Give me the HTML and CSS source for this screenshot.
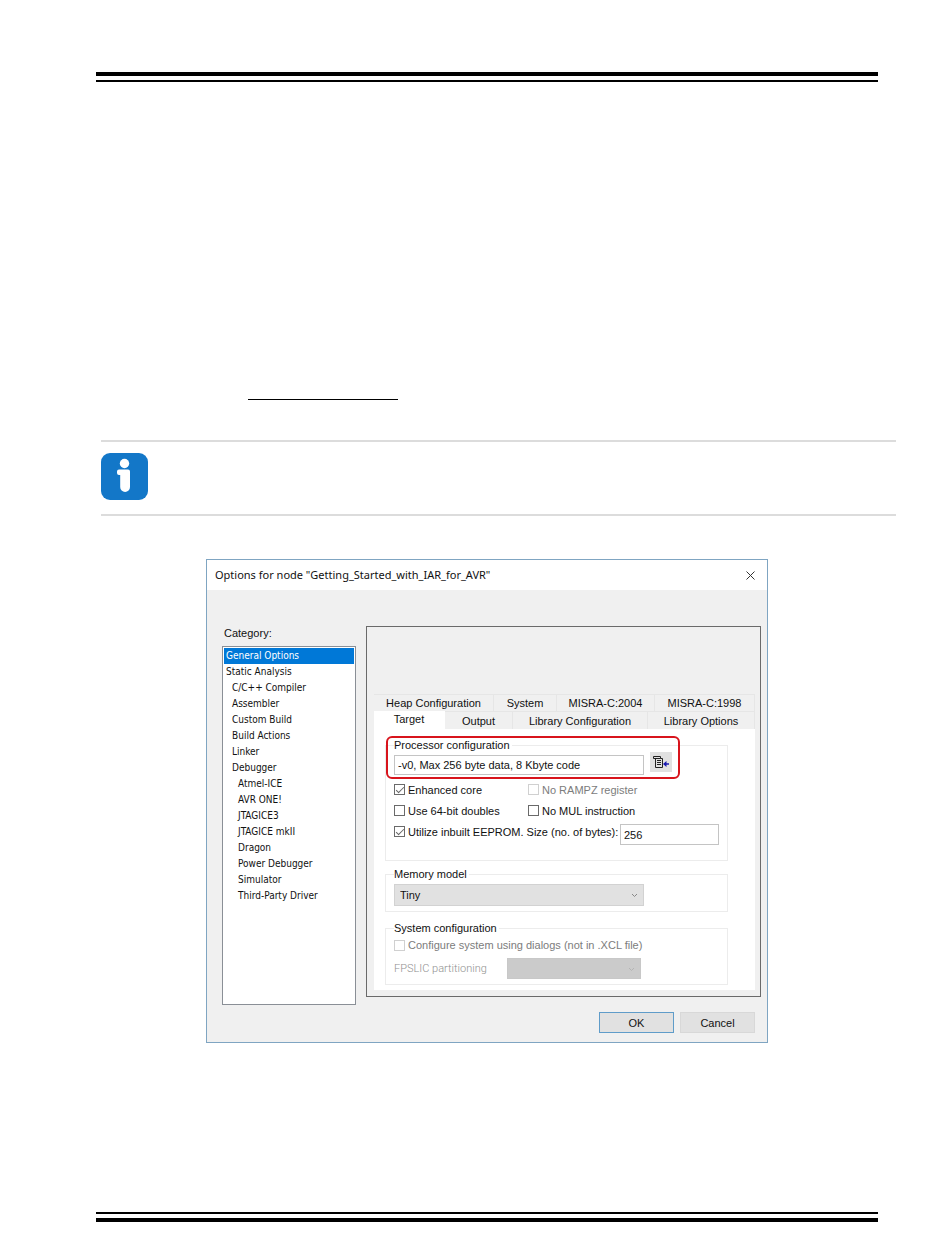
FILE: index.html
```html
<!DOCTYPE html>
<html lang="en">
<head>
    <meta charset="UTF-8">
    <meta name="viewport" content="width=device-width, initial-scale=1.0">
    <title>Options for node</title>
    <link rel="stylesheet" href="styles.css">
</head>
<body>
    <header class="page-header"></header>

    <main>
        <hr class="reference-line">

        <section class="notice">
            <svg class="info-icon" viewBox="0 0 47 47" role="img" aria-label="Info">
                <rect width="47" height="47" rx="9" fill="#1377c8"/>
                <circle cx="23.500" cy="10.500" r="4.700" fill="#fff"/>
                <path d="M18 16.500H27Q29 16.500 29 18.500V34A4.900 4.900 0 0 1 19.200 34V22H18Q16 22 16 20V18.500Q16 16.500 18 16.500Z" fill="#fff"/>
            </svg>
        </section>

        <section class="dialog">
            <div class="title-bar">
                <h1>Options for node "Getting_Started_with_IAR_for_AVR"</h1>
                <button class="close" type="button" aria-label="Close">
                    <svg viewBox="0 0 9 9"><path d="M.5 .5L8.500 8.500M8.500 .5L.5 8.500" stroke="#333" fill="none"/></svg>
                </button>
            </div>

            <div class="dialog-body">
                <nav class="category">
                    <h2>Category:</h2>
                    <ul>
                        <li><a class="selected" href="#">General Options</a></li>
                        <li><a href="#">Static Analysis</a></li>
                        <li><a class="level-1" href="#">C/C++ Compiler</a></li>
                        <li><a class="level-1" href="#">Assembler</a></li>
                        <li><a class="level-1" href="#">Custom Build</a></li>
                        <li><a class="level-1" href="#">Build Actions</a></li>
                        <li><a class="level-1" href="#">Linker</a></li>
                        <li><a class="level-1" href="#">Debugger</a></li>
                        <li><a class="level-2" href="#">Atmel-ICE</a></li>
                        <li><a class="level-2" href="#">AVR ONE!</a></li>
                        <li><a class="level-2" href="#">JTAGICE3</a></li>
                        <li><a class="level-2" href="#">JTAGICE mkII</a></li>
                        <li><a class="level-2" href="#">Dragon</a></li>
                        <li><a class="level-2" href="#">Power Debugger</a></li>
                        <li><a class="level-2" href="#">Simulator</a></li>
                        <li><a class="level-2" href="#">Third-Party Driver</a></li>
                    </ul>
                </nav>

                <div class="panel">
                    <div class="tabs tabs-back">
                        <button type="button">Heap Configuration</button>
                        <button type="button">System</button>
                        <button type="button">MISRA-C:2004</button>
                        <button type="button">MISRA-C:1998</button>
                    </div>
                    <div class="tabs tabs-front">
                        <button class="active" type="button">Target</button>
                        <button type="button">Output</button>
                        <button type="button">Library Configuration</button>
                        <button type="button">Library Options</button>
                    </div>

                    <form class="tab-page">
                        <fieldset class="processor">
                            <legend><label for="processor">Processor configuration</label></legend>
                            <div class="processor-row">
                                <input id="processor" class="text-box" type="text" value="-v0, Max 256 byte data, 8 Kbyte code">
                                <button class="pick" type="button" aria-label="Select processor">
                                    <svg viewBox="0 0 16 14">
                                        <path d="M.5 1.500H7.500V3.500H.5ZM2.500 3.500V12.500H9.500V3.500H7.500" stroke="#222" fill="none"/>
                                        <path d="M4 5.500H8M4 7.500H8M4 9.500H8" stroke="#222"/>
                                        <path d="M11 9H16" stroke="#1818b0" stroke-width="1.500"/>
                                        <path d="M10 9L13.500 6V12Z" fill="#1818b0"/>
                                    </svg>
                                </button>
                            </div>
                            <div class="highlight"></div>
                            <div class="options">
                                <label class="check"><input type="checkbox" checked>Enhanced core</label>
                                <label class="check disabled"><input type="checkbox" disabled>No RAMPZ register</label>
                                <label class="check"><input type="checkbox">Use 64-bit doubles</label>
                                <label class="check"><input type="checkbox">No MUL instruction</label>
                            </div>
                            <div class="eeprom-row">
                                <label class="check"><input type="checkbox" checked>Utilize inbuilt EEPROM. Size (no. of bytes):</label>
                                <input class="text-box" type="text" value="256" aria-label="EEPROM size">
                            </div>
                        </fieldset>

                        <fieldset class="memory">
                            <legend><label for="memory">Memory model</label></legend>
                            <div class="drop-down">
                                <select id="memory"><option>Tiny</option></select>
                                <svg viewBox="0 0 7 5"><path d="M1 1L3.500 3.500L6 1" stroke="#888" fill="none"/></svg>
                            </div>
                        </fieldset>

                        <fieldset class="system">
                            <legend>System configuration</legend>
                            <label class="check disabled"><input type="checkbox" disabled>Configure system using dialogs (not in .XCL file)</label>
                            <div class="fpslic-row">
                                <label for="fpslic">FPSLIC partitioning</label>
                                <div class="drop-down">
                                    <select id="fpslic" disabled></select>
                                    <svg viewBox="0 0 7 5"><path d="M1 1L3.500 3.500L6 1" stroke="#b4b4b4" fill="none"/></svg>
                                </div>
                            </div>
                        </fieldset>
                    </form>
                </div>
            </div>

            <div class="actions">
                <button class="default" type="button">OK</button>
                <button type="button">Cancel</button>
            </div>
        </section>
    </main>

    <footer class="page-footer"></footer>
</body>
</html>
```

FILE: styles.css
```css
* {
    box-sizing: border-box;
}

body {
    margin: 0;
    min-height: 100vh;
    display: flex;
    flex-direction: column;
    background-color: #fff;
    color: #111;
    font-family: "Liberation Sans", Arial, sans-serif;
    font-size: 11px;
    line-height: 14px;
}

button, input, select {
    margin: 0;
    padding: 0;
    border: none;
    border-radius: 0;
    font: inherit;
    color: inherit;
}

/* Double rules at the top and bottom of the page */
.page-header, .page-footer {
    height: 10px;
    margin: 72px 72px 0 96px;
    border-top: 4px solid #000;
    border-bottom: 2px solid #000;
}

.page-footer {
    margin: auto 72px 26px 96px;
    border-top-width: 2px;
    border-bottom-width: 4px;
}

.reference-line {
    width: 150px;
    margin: 317px 0 0 248px;
    border: none;
    border-top: 1px solid #000;
}

.notice {
    margin: 40px 54px 0 101px;
    padding: 11px 0 14px;
    border-top: 2px solid #dcdcdc;
    border-bottom: 2px solid #dcdcdc;
}

.info-icon {
    display: block;
    width: 47px;
    height: 47px;
}

/* Dialog window */
.dialog {
    margin: 43px 182px 0 206px;
    border: 1px solid #7fa5c2;
    background-color: #f0f0f0;
}

.title-bar {
    display: flex;
    justify-content: space-between;
    align-items: center;
    height: 30px;
    padding: 0 12px 0 8px;
    background-color: #fff;
}

.title-bar h1 {
    margin: 0;
    font-family: "Noto Sans", "Open Sans", sans-serif;
    font-size: 11px;
    font-weight: normal;
}

.close {
    display: flex;
    background: none;
}

.close svg {
    width: 9px;
    height: 9px;
}

.dialog-body {
    display: grid;
    grid-template-columns: 134px 1fr;
    gap: 10px;
    padding: 36px 6px 0 15px;
}

.category {
    display: flex;
    flex-direction: column;
}

.category h2 {
    margin: 0 0 6px 2px;
    font-size: 11px;
    font-weight: normal;
}

.category ul {
    flex: 1;
    margin: 0;
    padding: 1px;
    border: 1px solid #8a8f96;
    background-color: #fff;
    font-family: Tahoma, "DejaVu Sans Condensed", "Noto Sans", sans-serif;
    font-size: 10px;
    list-style: none;
}

.category a {
    display: block;
    padding-left: 2px;
    color: #111;
    line-height: 16px;
    text-decoration: none;
}

.category .selected {
    background-color: #0078d7;
    color: #fff;
}

.category .level-1 {
    padding-left: 8px;
}

.category .level-2 {
    padding-left: 14px;
}

.panel {
    margin-bottom: 8px;
    padding: 67px 5px 6px 7px;
    border: 1px solid #6a6a6a;
}

/* Two rows of tabs */
.tabs {
    display: grid;
}

.tabs-back {
    grid-template-columns: 120fr 63fr 98fr 100fr;
    height: 17px;
}

.tabs-front {
    grid-template-columns: 71fr 68fr 135fr 107fr;
    height: 18px;
}

.tabs button {
    border-top: 1px solid #e6e6e6;
    border-right: 1px solid #e6e6e6;
    background-color: #f0f0f0;
    white-space: nowrap;
}

.tabs .active {
    padding-bottom: 3px;
    border-color: #fff;
    background-color: #fff;
}

.tab-page {
    padding: 9px 27px 5px 11px;
    background-color: #fff;
}

fieldset {
    position: relative;
    min-width: 0;
    margin: 0;
    padding: 0 8px;
    border: 1px solid #ececec;
}

legend {
    padding: 0 2px 0 0;
}

.processor {
    padding-bottom: 15px;
}

.processor-row {
    display: flex;
    align-items: flex-start;
    gap: 6px;
    margin-right: 47px;
}

.text-box {
    flex: 1;
    min-width: 0;
    height: 20px;
    padding: 0 3px;
    border: 1px solid #c4c4c4;
    background-color: #fff;
}

.processor-row .text-box {
    margin-top: 3px;
}

.pick {
    display: flex;
    justify-content: center;
    align-items: center;
    width: 22px;
    height: 20px;
    background-color: #e1e1e1;
}

.pick svg {
    width: 16px;
    height: 14px;
}

/* Red frame around the processor setting */
.highlight {
    position: absolute;
    top: -16px;
    left: 0;
    right: 47px;
    height: 43px;
    border: 2px solid #d8141c;
    border-radius: 6px;
    pointer-events: none;
}

.options {
    display: grid;
    grid-template-columns: 134px 1fr;
    margin-top: 4px;
}

.check {
    display: flex;
    align-items: center;
    gap: 3px;
    height: 21px;
    white-space: nowrap;
}

.check input {
    appearance: none;
    display: grid;
    place-content: center;
    width: 11px;
    height: 11px;
    border: 1px solid #6a6a6a;
    background-color: #fff;
}

.check input:checked::after {
    content: "";
    width: 7px;
    height: 3px;
    margin-bottom: 2px;
    border-left: 1px solid #666;
    border-bottom: 1px solid #666;
    transform: rotate(-45deg);
}

.check.disabled {
    color: #7c7c7c;
}

.check.disabled input {
    border-color: #d0d0d0;
}

.eeprom-row {
    display: flex;
    justify-content: space-between;
    align-items: flex-start;
}

.eeprom-row .text-box {
    flex: none;
    width: 99px;
    height: 21px;
    margin-top: 3px;
}

.memory {
    margin-top: 6px;
    padding: 3px 83px 5px 8px;
}

.drop-down {
    position: relative;
}

.drop-down select {
    appearance: none;
    display: block;
    width: 100%;
    height: 22px;
    padding: 0 5px;
    border: 1px solid #d2d2d2;
    background-color: #e1e1e1;
}

.drop-down svg {
    position: absolute;
    top: 9px;
    right: 6px;
    width: 7px;
    height: 5px;
}

.system {
    margin-top: 9px;
    padding-bottom: 5px;
}

.system .check {
    height: 20px;
}

.fpslic-row {
    display: grid;
    grid-template-columns: 113px 1fr;
    align-items: center;
    margin: 3px 78px 0 0;
    color: #909090;
    font-family: Roboto, sans-serif;
    font-weight: 300;
}

.fpslic-row select {
    height: 21px;
    border-color: #c8c8c8;
    background-color: #cbcbcb;
    opacity: 1;
}

.actions {
    display: flex;
    justify-content: flex-end;
    gap: 6px;
    padding: 7px 12px 9px;
}

.actions button {
    width: 75px;
    height: 21px;
    border: 1px solid #d8d8d8;
    background-color: #e1e1e1;
}

.actions .default {
    border-color: #5f9cc9;
}
```
